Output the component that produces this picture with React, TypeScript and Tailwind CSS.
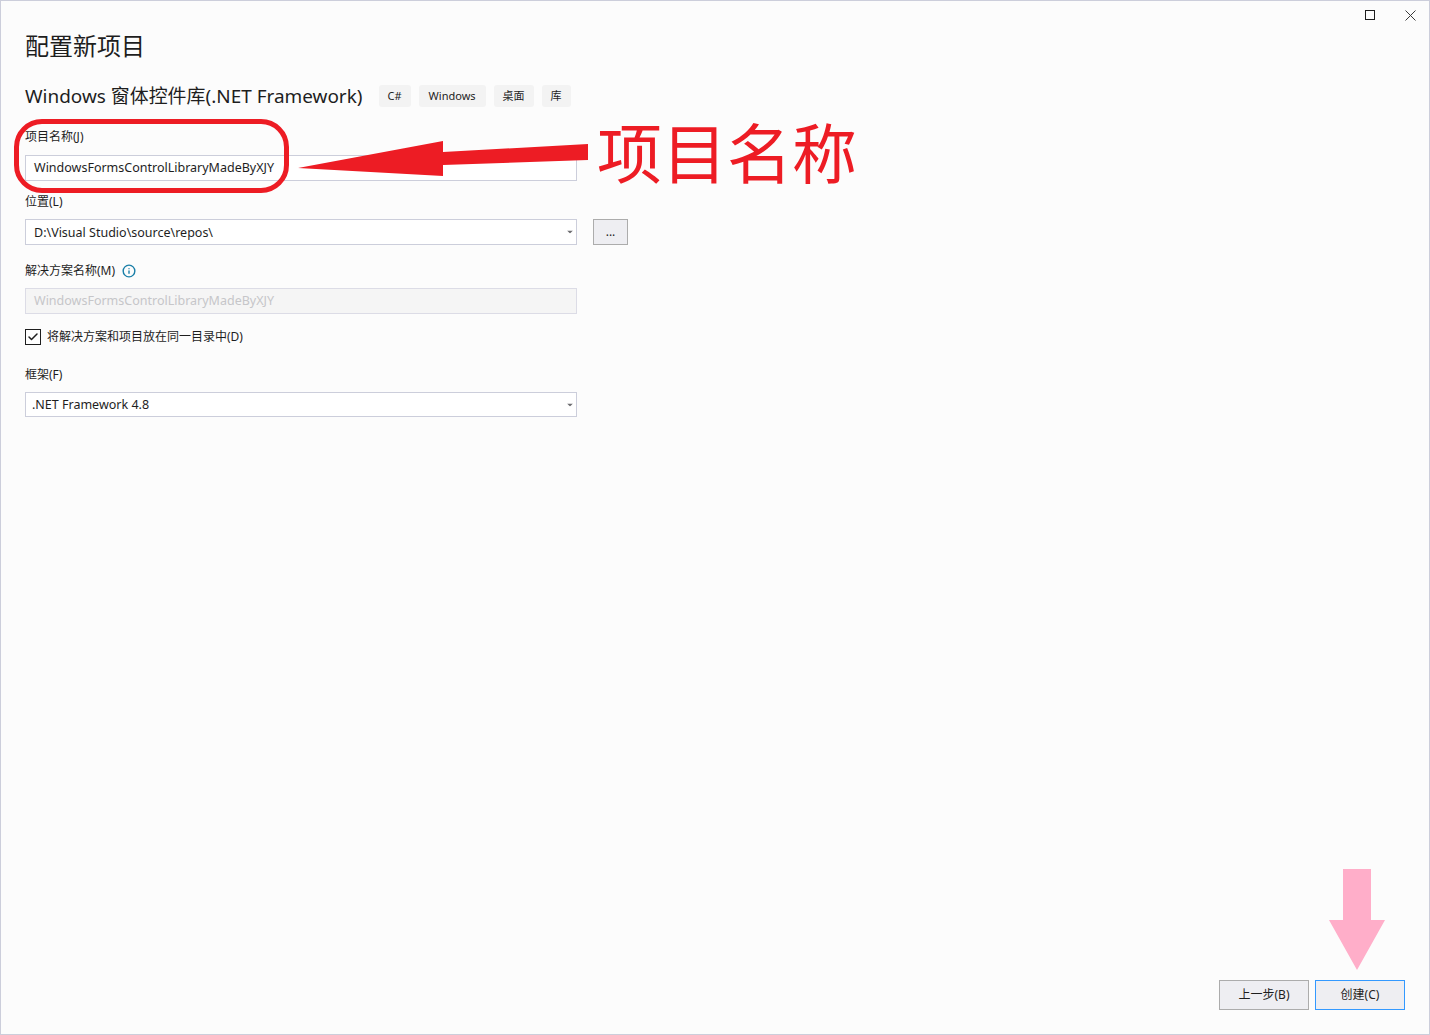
import { Check, Info } from "lucide-react";
import { clsx } from "clsx";

const tags = ["C#", "Windows", "桌面", "库"];

const ComboArrow = () => (
  <svg width="6" height="3" viewBox="0 0 6 3" className="absolute right-[3px] top-1/2 -translate-y-1/2">
    <path d="M0 0h6L3 3z" fill="#6d6d70" />
  </svg>
);

const Label = ({ children }: { children: React.ReactNode }) => (
  <div className="text-[12px] leading-[16px] text-[#1e1e1e]">{children}</div>
);

const Field = ({ children, arrow }: { children: React.ReactNode; arrow?: boolean }) => (
  <div
    className={clsx(
      "relative flex h-[26px] w-[552px] items-center border border-[#cccedb] bg-white pl-[8px] text-[12.5px] text-[#1e1e1e]",
      arrow && "pt-[2px]",
    )}
  >
    {children}
    {arrow && <ComboArrow />}
  </div>
);

export default function App() {
  return (
    <div className="relative h-[1035px] w-[1430px] overflow-hidden border border-[#cccedb] bg-[#fcfcfc] font-['Noto_Sans','Noto_Sans_CJK_SC',sans-serif]">
      {/* Window buttons */}
      <div className="-mr-[1px] flex h-[28px] items-center justify-end">
        <button className="flex w-[40px] items-center justify-center">
          <span className="block h-[10px] w-[10px] border border-[#1e1e1e]" />
        </button>
        <button className="flex w-[40px] items-center justify-center">
          <svg width="11" height="11" viewBox="0 0 11 11">
            <path d="M.5.500l10 10M10.500.500l-10 10" stroke="#3a3a3a" fill="none" />
          </svg>
        </button>
      </div>

      <div className="flex flex-col pl-[24px]">
        <h1 className="pt-[1px] text-[24px] leading-[32px] text-[#1e1e1e]">配置新项目</h1>

        {/* Template name and tags */}
        <div className="mt-[18px] flex h-[32px] items-center">
          <span className="text-[18.95px] text-[#1e1e1e]">Windows 窗体控件库(.NET Framework)</span>
          <div className="ml-[16px] flex gap-[8px]">
            {tags.map((tag) => (
              <span
                key={tag}
                className={clsx(
                  "flex h-[22px] items-center justify-center rounded-[3px] bg-[#f3f3f3] text-[11px] text-[#1e1e1e]",
                  tag === "Windows" ? "px-[10px]" : "px-[9px]",
                )}
              >
                {tag}
              </span>
            ))}
          </div>
        </div>

        <div className="mt-[17px] mb-[10px]">
          <Label>项目名称(J)</Label>
        </div>
        <Field>WindowsFormsControlLibraryMadeByXJY</Field>

        <div className="mt-[13px] mb-[9px]">
          <Label>位置(L)</Label>
        </div>
        <div className="flex items-center gap-[16px]">
          <Field arrow>D:\Visual Studio\source\repos\</Field>
          <button className="flex h-[26px] w-[35px] items-center justify-center border border-[#acacac] bg-[#eeeef2] text-[12px] text-[#1e1e1e]">
            ...
          </button>
        </div>

        <div className="mt-[18px] mb-[9px] flex items-center gap-[7px]">
          <Label>解决方案名称(M)</Label>
          <Info size={14} strokeWidth={2.4} className="text-[#1a7fa8]" />
        </div>
        <div className="flex h-[26px] w-[552px] items-center border border-[#dcdce6] bg-[#f5f5f5] pl-[8px] text-[12.5px] text-[#c6c6c9]">
          WindowsFormsControlLibraryMadeByXJY
        </div>

        <div className="mt-[15px] flex items-center gap-[6px]">
          <span className="flex h-[16px] w-[16px] items-center justify-center border border-[#1e1e1e] bg-white">
            <Check size={12} strokeWidth={3} className="text-[#1e1e1e]" />
          </span>
          <Label>将解决方案和项目放在同一目录中(D)</Label>
        </div>

        <div className="mt-[22px] mb-[9px]">
          <Label>框架(F)</Label>
        </div>
        <div className="relative flex h-[25px] w-[552px] items-center border border-[#cccedb] bg-white pt-[2px] pl-[6px] text-[12.5px] text-[#1e1e1e]">
          .NET Framework 4.8
          <ComboArrow />
        </div>
      </div>

      {/* Footer buttons */}
      <div className="absolute bottom-[24px] right-[24px] flex gap-[6px]">
        <button className="flex h-[30px] w-[90px] items-center justify-center border border-[#acacac] bg-[#eeeef2] text-[12px] text-[#1e1e1e]">
          上一步(B)
        </button>
        <button className="flex h-[30px] w-[90px] items-center justify-center border border-[#3399ff] bg-[#eeeef2] text-[12px] text-[#1e1e1e]">
          创建(C)
        </button>
      </div>

      {/* Red annotation over the project name */}
      <div className="absolute left-[13px] top-[118px] h-[74px] w-[275px] rounded-[28px] border-[5px] border-[#ed1c24]" />
      <svg width="300" height="50" viewBox="0 0 300 50" className="absolute left-[295px] top-[138px]">
        <path d="M2 29 147 2l0 11 145-8 0 16-145 5 0 11z" fill="#ed1c24" />
      </svg>
      <div className="absolute left-[596px] top-[107px] text-[65px] leading-[90px] text-[#ed1c24]">项目名称</div>

      {/* Pink annotation over the create button */}
      <svg width="56" height="102" viewBox="0 0 56 102" className="absolute left-[1328px] top-[868px]">
        <path d="M14 0h28v51h14L28 101 0 51h14z" fill="#ffaec9" />
      </svg>
    </div>
  );
}
